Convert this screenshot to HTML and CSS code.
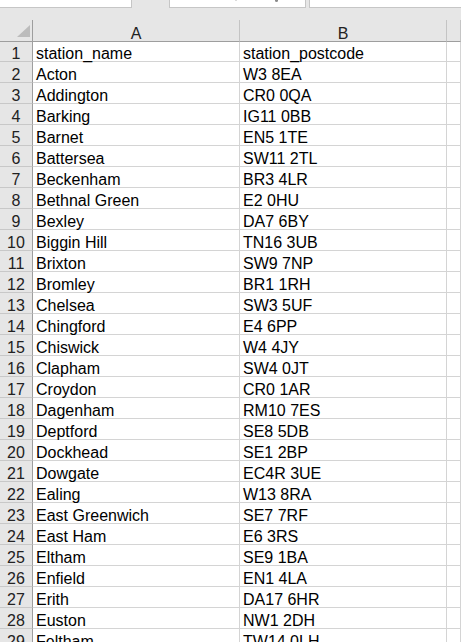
FILE: index.html
```html
<!DOCTYPE html>
<html lang="en">
  <head>
    <meta charset="UTF-8" />
    <meta name="viewport" content="width=device-width, initial-scale=1.0" />
    <title>stations</title>
    <link rel="stylesheet" href="styles.css">
  </head>
  <body>
    <div class="toolbar">
      <div class="box name-box"></div>
      <div class="box tools-box">
        <span class="mark faint"></span>
        <span class="mark"></span>
      </div>
      <div class="box formula-box"></div>
    </div>
    <div class="sheet">
      <div class="cell corner">
        <svg width="13" height="12" viewBox="0 0 13 12"><polygon points="13,0 13,12 0,12" fill="#bcbcbc" /></svg>
      </div>
      <div class="cell col-head">A</div>
      <div class="cell col-head">B</div>
      <div class="cell col-head"></div>
    </div>
    <script>
      const rows = [
        ['station_name', 'station_postcode'],
        ['Acton', 'W3 8EA'],
        ['Addington', 'CR0 0QA'],
        ['Barking', 'IG11 0BB'],
        ['Barnet', 'EN5 1TE'],
        ['Battersea', 'SW11 2TL'],
        ['Beckenham', 'BR3 4LR'],
        ['Bethnal Green', 'E2 0HU'],
        ['Bexley', 'DA7 6BY'],
        ['Biggin Hill', 'TN16 3UB'],
        ['Brixton', 'SW9 7NP'],
        ['Bromley', 'BR1 1RH'],
        ['Chelsea', 'SW3 5UF'],
        ['Chingford', 'E4 6PP'],
        ['Chiswick', 'W4 4JY'],
        ['Clapham', 'SW4 0JT'],
        ['Croydon', 'CR0 1AR'],
        ['Dagenham', 'RM10 7ES'],
        ['Deptford', 'SE8 5DB'],
        ['Dockhead', 'SE1 2BP'],
        ['Dowgate', 'EC4R 3UE'],
        ['Ealing', 'W13 8RA'],
        ['East Greenwich', 'SE7 7RF'],
        ['East Ham', 'E6 3RS'],
        ['Eltham', 'SE9 1BA'],
        ['Enfield', 'EN1 4LA'],
        ['Erith', 'DA17 6HR'],
        ['Euston', 'NW1 2DH'],
        ['Feltham', 'TW14 0LH']
      ]
      const sheet = document.querySelector('.sheet')
      let content = ''
      rows.forEach((row, i) => {
        content += `
          <div class="cell row-head">${i + 1}</div>
          <div class="cell">${row[0]}</div>
          <div class="cell">${row[1]}</div>
          <div class="cell"></div>`
      })
      sheet.insertAdjacentHTML('beforeend', content)
    </script>
  </body>
</html>
```

FILE: styles.css
```css
html,
body {
  margin: 0;
  padding: 0;
  height: 100%;
  overflow: hidden;
  background: #fff;
  font-family: 'Liberation Sans', Arial, sans-serif;
  font-size: 16px;
  color: #000;
}
.toolbar {
  display: flex;
  align-items: flex-start;
  height: 20px;
  background: #e6e6e6;
}
.box {
  height: 7px;
  background: #fff;
  border-bottom: 1px solid #c6c6c6;
}
.name-box {
  width: 131px;
  border-right: 1px solid #c6c6c6;
}
.tools-box {
  display: flex;
  align-items: flex-start;
  width: 135px;
  margin-left: 37px;
  border-left: 1px solid #c6c6c6;
  border-right: 1px solid #c6c6c6;
}
.mark {
  display: inline-block;
  width: 3px;
  height: 2px;
  margin-left: 65px;
  background: #8a8a8a;
  border-radius: 0 0 2px 2px;
}
.mark.faint {
  width: 2px;
  height: 1px;
  background: #cfcfcf;
}
.mark + .mark {
  margin-left: 38px;
}
.formula-box {
  flex: 1;
  margin-left: 3px;
  border-left: 1px solid #c6c6c6;
}
.sheet {
  display: grid;
  grid-template-columns: 33px 207px 207px 1fr;
  grid-template-rows: 22px 20px;
  grid-auto-rows: 21px;
}
.cell {
  display: flex;
  align-items: flex-end;
  box-sizing: border-box;
  padding-left: 3px;
  line-height: 14px;
  white-space: nowrap;
  border-right: 1px solid #d4d4d4;
  border-bottom: 1px solid #d4d4d4;
}
.corner {
  justify-content: flex-end;
  padding: 0 2px 4px 0;
  background: #e6e6e6;
  border-right: 1px solid #9e9e9e;
  border-bottom: 1px solid #9e9e9e;
}
.col-head {
  justify-content: center;
  padding-left: 0;
  background: #e6e6e6;
  color: #222;
  border-right: 1px solid #c4c4c4;
  border-bottom: 1px solid #9e9e9e;
}
.row-head {
  justify-content: center;
  padding-left: 0;
  background: #e6e6e6;
  color: #222;
  border-right: 1px solid #9e9e9e;
  border-bottom: 1px solid #c8c8c8;
}
```
